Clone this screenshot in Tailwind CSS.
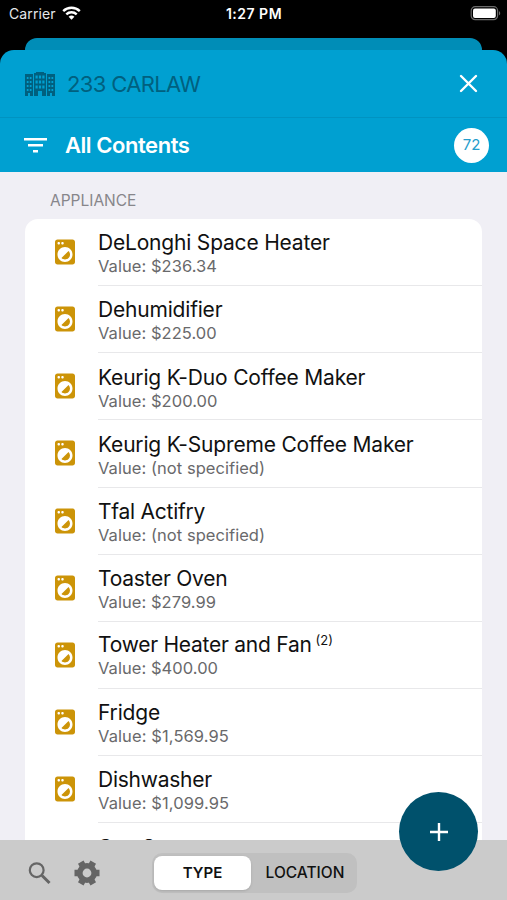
<!DOCTYPE html>
<html lang="en">
<head>
  <meta charset="UTF-8">
  <meta name="viewport" content="width=device-width, initial-scale=1.0">
  <title>233 Carlaw - All Contents</title>
  <script src="https://cdn.jsdelivr.net/npm/@tailwindcss/browser@4"></script>
</head>
<body class="bg-black font-['Inter',sans-serif]">
  <!-- Shared icons -->
  <svg class="hidden">
    <symbol id="washer" viewBox="0 0 24 24">
      <path d="M9.17 16.83c1.56 1.56 4.1 1.56 5.66 0 1.56-1.56 1.56-4.1 0-5.66l-5.66 5.66zM18 2.01L6 2c-1.11 0-2 .89-2 2v16c0 1.11.89 2 2 2h12c1.11 0 2-.89 2-2V4c0-1.11-.89-1.99-2-1.99zM10 4c.55 0 1 .45 1 1s-.45 1-1 1-1-.45-1-1 .45-1 1-1zM7 4c.55 0 1 .45 1 1s-.45 1-1 1-1-.45-1-1 .45-1 1-1zm5 16c-3.31 0-6-2.69-6-6s2.69-6 6-6 6 2.69 6 6-2.69 6-6 6z"/>
    </symbol>
  </svg>

  <div class="relative flex h-[900px] w-[507px] flex-col overflow-hidden">
    <!-- Status bar -->
    <div class="grid h-[38px] shrink-0 grid-cols-3 pt-1 text-[14px] leading-5 text-white">
      <div class="flex items-start pl-[9px]">
        <span class="tracking-[0.1px] text-gray-200">Carrier</span>
        <svg class="ml-1.5 mt-0.5 h-[14px] w-[19px]" viewBox="0 0 19 14" fill="none" stroke="white" stroke-width="2.4">
          <path d="M1.2 5.2a11.8 11.8 0 0 1 16.6 0"/>
          <path d="M4.3 8.4a7.4 7.4 0 0 1 10.4 0"/>
          <path d="M9.5 13.8l-2.9-3a4.2 4.2 0 0 1 5.8 0z" fill="white" stroke="none"/>
        </svg>
      </div>
      <div class="pl-px text-center font-semibold tracking-[0.5px]">1:27 PM</div>
      <div class="flex justify-end pr-[6px] pt-0.5">
        <svg class="h-[15px] w-[31px]" viewBox="0 0 31 15">
          <rect x="1.2" y=".7" width="26.4" height="13" rx="4" fill="none" stroke="#6b6b6b" stroke-width="1.2"/>
          <rect x="3" y="2.5" width="22.8" height="9.4" rx="2" fill="white"/>
          <path d="M29 5.2c1.6.5 1.6 3.6 0 4.1z" fill="#6b6b6b"/>
        </svg>
      </div>
    </div>

    <!-- Sheet behind -->
    <div class="mx-[25px] h-3 shrink-0 rounded-t-xl bg-[#008db7]"></div>

    <!-- Header -->
    <header class="h-[122px] shrink-0 rounded-t-[14px] bg-[#00a0d1]">
      <div class="flex h-[68px] items-center border-b border-[#0093c1] pl-[25px] pr-[29px] text-[#00607f]">
        <svg class="h-6 w-[30px]" viewBox="0 0 30 24" fill="currentColor" fill-rule="evenodd">
          <path d="M0 2h8v22H5v-3H3v3H0zM1.800 5v2h1.700V5zM4.800 5v2h1.700V5zM1.800 9v2h1.700V9zM4.800 9v2h1.700V9zM1.800 13v2h1.700v-2zM4.800 13v2h1.700v-2zM1.800 17v2h1.700v-2zM4.800 17v2h1.700v-2z"/>
          <path d="M22 2h8v22h-3v-3h-2v3h-3zM23.500 5v2h1.700V5zM26.500 5v2h1.700V5zM23.500 9v2h1.700V9zM26.500 9v2h1.700V9zM23.500 13v2h1.700v-2zM26.500 13v2h1.700v-2zM23.500 17v2h1.700v-2zM26.500 17v2h1.700v-2z"/>
          <path d="M9 1h2V0h8v1h2v23h-4v-5h-4v5H9zM10.500 3.500v3h2.200v-3zM13.900 3.500v3h2.200v-3zM17.300 3.500v3h2.200v-3zM10.500 8.500v3h2.200v-3zM13.900 8.500v3h2.200v-3zM17.300 8.500v3h2.200v-3zM10.500 13.500v3h2.200v-3zM13.900 13.500v3h2.200v-3zM17.300 13.500v3h2.200v-3z"/>
        </svg>
        <h1 class="ml-3 pt-px text-[22px] tracking-[-0.65px]">233 CARLAW</h1>
        <svg class="ml-auto h-[19px] w-[19px]" viewBox="0 0 19 19" fill="none" stroke="white" stroke-width="2.4" stroke-linecap="round">
          <path d="M2 2l15 15M17 2L2 17"/>
        </svg>
      </div>
      <div class="flex h-[54px] items-center pl-6 pr-[18px] text-white">
        <svg class="h-4 w-[23px]" viewBox="0 0 23 16" fill="currentColor">
          <path d="M0 1h23v2.400H0zM4 7h15v2.400H4zM9 13h5v2.400H9z"/>
        </svg>
        <h2 class="ml-[18px] text-[22px] font-semibold tracking-[-0.45px]">All Contents</h2>
        <span class="ml-auto flex h-[35px] w-[35px] items-center justify-center rounded-full bg-white pt-px text-[15px] text-[#259dcc]">72</span>
      </div>
    </header>

    <!-- Contents list -->
    <main class="flex min-h-0 flex-1 flex-col overflow-hidden bg-[#f0eff5] px-[25px]">
      <h3 class="flex h-[47px] shrink-0 items-center pl-[25px] pt-2.5 text-[15.5px] text-[#87868b]">APPLIANCE</h3>
      <ul class="min-h-0 flex-1 overflow-hidden rounded-t-[13px] bg-white text-[#111]">
        <li class="flex h-[67.15px] items-center pl-[24.5px]">
          <svg class="mb-px h-[30px] w-[30px] fill-[#cc9408]"><use href="#washer"/></svg>
          <div class="ml-[18.5px] h-full flex-1 border-b border-[#e8e8ea] pt-[11px]">
            <p class="text-[21px] leading-[26px] tracking-[-0.19px]">DeLonghi Space Heater</p>
            <p class="text-[16.5px] leading-[21px] tracking-[0.05px] text-[#69696b]">Value: $236.34</p>
          </div>
        </li>
        <li class="flex h-[67.15px] items-center pl-[24.5px]">
          <svg class="mb-px h-[30px] w-[30px] fill-[#cc9408]"><use href="#washer"/></svg>
          <div class="ml-[18.5px] h-full flex-1 border-b border-[#e8e8ea] pt-[11px]">
            <p class="text-[21px] leading-[26px] tracking-[-0.19px]">Dehumidifier</p>
            <p class="text-[16.5px] leading-[21px] tracking-[0.05px] text-[#69696b]">Value: $225.00</p>
          </div>
        </li>
        <li class="flex h-[67.15px] items-center pl-[24.5px]">
          <svg class="mb-px h-[30px] w-[30px] fill-[#cc9408]"><use href="#washer"/></svg>
          <div class="ml-[18.5px] h-full flex-1 border-b border-[#e8e8ea] pt-[11.3px]">
            <p class="text-[21px] leading-[26px] tracking-[-0.19px]">Keurig K-Duo Coffee Maker</p>
            <p class="text-[16.5px] leading-[21px] tracking-[0.05px] text-[#69696b]">Value: $200.00</p>
          </div>
        </li>
        <li class="flex h-[67.15px] items-center pl-[24.5px]">
          <svg class="mb-px h-[30px] w-[30px] fill-[#cc9408]"><use href="#washer"/></svg>
          <div class="ml-[18.5px] h-full flex-1 border-b border-[#e8e8ea] pt-[11.3px]">
            <p class="text-[21px] leading-[26px] tracking-[-0.19px]">Keurig K-Supreme Coffee Maker</p>
            <p class="text-[16.5px] leading-[21px] tracking-[0.05px] text-[#69696b]">Value: (not specified)</p>
          </div>
        </li>
        <li class="flex h-[67.15px] items-center pl-[24.5px]">
          <svg class="mb-px h-[30px] w-[30px] fill-[#cc9408]"><use href="#washer"/></svg>
          <div class="ml-[18.5px] h-full flex-1 border-b border-[#e8e8ea] pt-[11.3px]">
            <p class="text-[21px] leading-[26px] tracking-[-0.25px]">Tfal Actifry</p>
            <p class="text-[16.5px] leading-[21px] tracking-[0.05px] text-[#69696b]">Value: (not specified)</p>
          </div>
        </li>
        <li class="flex h-[67.15px] items-center pl-[24.5px]">
          <svg class="mb-px h-[30px] w-[30px] fill-[#cc9408]"><use href="#washer"/></svg>
          <div class="ml-[18.5px] h-full flex-1 border-b border-[#e8e8ea] pt-[11.3px]">
            <p class="text-[21px] leading-[26px] tracking-[-0.25px]">Toaster Oven</p>
            <p class="text-[16.5px] leading-[21px] tracking-[0.05px] text-[#69696b]">Value: $279.99</p>
          </div>
        </li>
        <li class="flex h-[67.15px] items-center pl-[24.5px]">
          <svg class="mb-px h-[30px] w-[30px] fill-[#cc9408]"><use href="#washer"/></svg>
          <div class="ml-[18.5px] h-full flex-1 border-b border-[#e8e8ea] pt-[10.5px]">
            <p class="flex text-[21px] leading-[26px] tracking-[-0.25px]">Tower Heater and Fan<span class="ml-1 text-[13px] leading-4 tracking-normal">(2)</span></p>
            <p class="text-[16.5px] leading-[21px] tracking-[0.05px] text-[#69696b]">Value: $400.00</p>
          </div>
        </li>
        <li class="flex h-[67.15px] items-center pl-[24.5px]">
          <svg class="mb-px h-[30px] w-[30px] fill-[#cc9408]"><use href="#washer"/></svg>
          <div class="ml-[18.5px] h-full flex-1 border-b border-[#e8e8ea] pt-[11px]">
            <p class="text-[21px] leading-[26px] tracking-[-0.19px]">Fridge</p>
            <p class="text-[16.5px] leading-[21px] tracking-[0.1px] text-[#69696b]">Value: $1,569.95</p>
          </div>
        </li>
        <li class="flex h-[67.15px] items-center pl-[24.5px]">
          <svg class="mb-px h-[30px] w-[30px] fill-[#cc9408]"><use href="#washer"/></svg>
          <div class="ml-[18.5px] h-full flex-1 border-b border-[#e8e8ea] pt-[11px]">
            <p class="text-[21px] leading-[26px] tracking-[-0.25px]">Dishwasher</p>
            <p class="text-[16.5px] leading-[21px] tracking-[0.1px] text-[#69696b]">Value: $1,099.95</p>
          </div>
        </li>
        <li class="flex h-[67.15px] items-start pl-[72.5px] pt-[11.8px]">
          <p class="text-[21px] leading-[26px]">Gas Stove</p>
        </li>
      </ul>
    </main>

    <!-- Toolbar -->
    <footer class="flex h-[60px] shrink-0 items-center bg-[#cbcbcb] pl-[28px] pt-[6px] text-[#656565]">
      <svg class="h-[23px] w-[23px]" viewBox="0 0 23 23" fill="none" stroke="currentColor">
        <circle cx="8.700" cy="8.200" r="6.900" stroke-width="2.200"/>
        <path d="M14 13.500l7.500 7.500" stroke-width="3"/>
      </svg>
      <svg class="ml-[22.5px] mb-px h-[26px] w-[26px]" viewBox="-13 -13 26 26" fill="none" stroke="currentColor">
        <circle r="7.200" stroke-width="5.600"/>
        <path d="M8 0h4.500M-8 0h-4.500M4 6.930l2.250 3.900M-4 6.930l-2.250 3.900M4-6.930l2.250-3.900M-4-6.930l-2.250-3.900" stroke-width="6.400"/>
      </svg>
      <div class="ml-[52.5px] flex h-10 w-[205px] items-center rounded-[10px] bg-[#c0c0c0] p-0.5 text-[15px] text-[#111]">
        <button class="h-[34px] w-[97px] rounded-lg bg-white font-semibold shadow">TYPE</button>
        <button class="flex-1 pl-1 text-[15.5px] font-medium">LOCATION</button>
      </div>
    </footer>

    <!-- Add button floats over list and toolbar -->
    <button class="absolute left-[399px] top-[792px] flex h-[79px] w-[79px] items-center justify-center rounded-full bg-[#00516c]">
      <svg class="h-[18px] w-[18px]" viewBox="0 0 18 18" stroke="white" stroke-width="2.400">
        <path d="M9 0v18M0 9h18"/>
      </svg>
    </button>
  </div>
</body>
</html>
